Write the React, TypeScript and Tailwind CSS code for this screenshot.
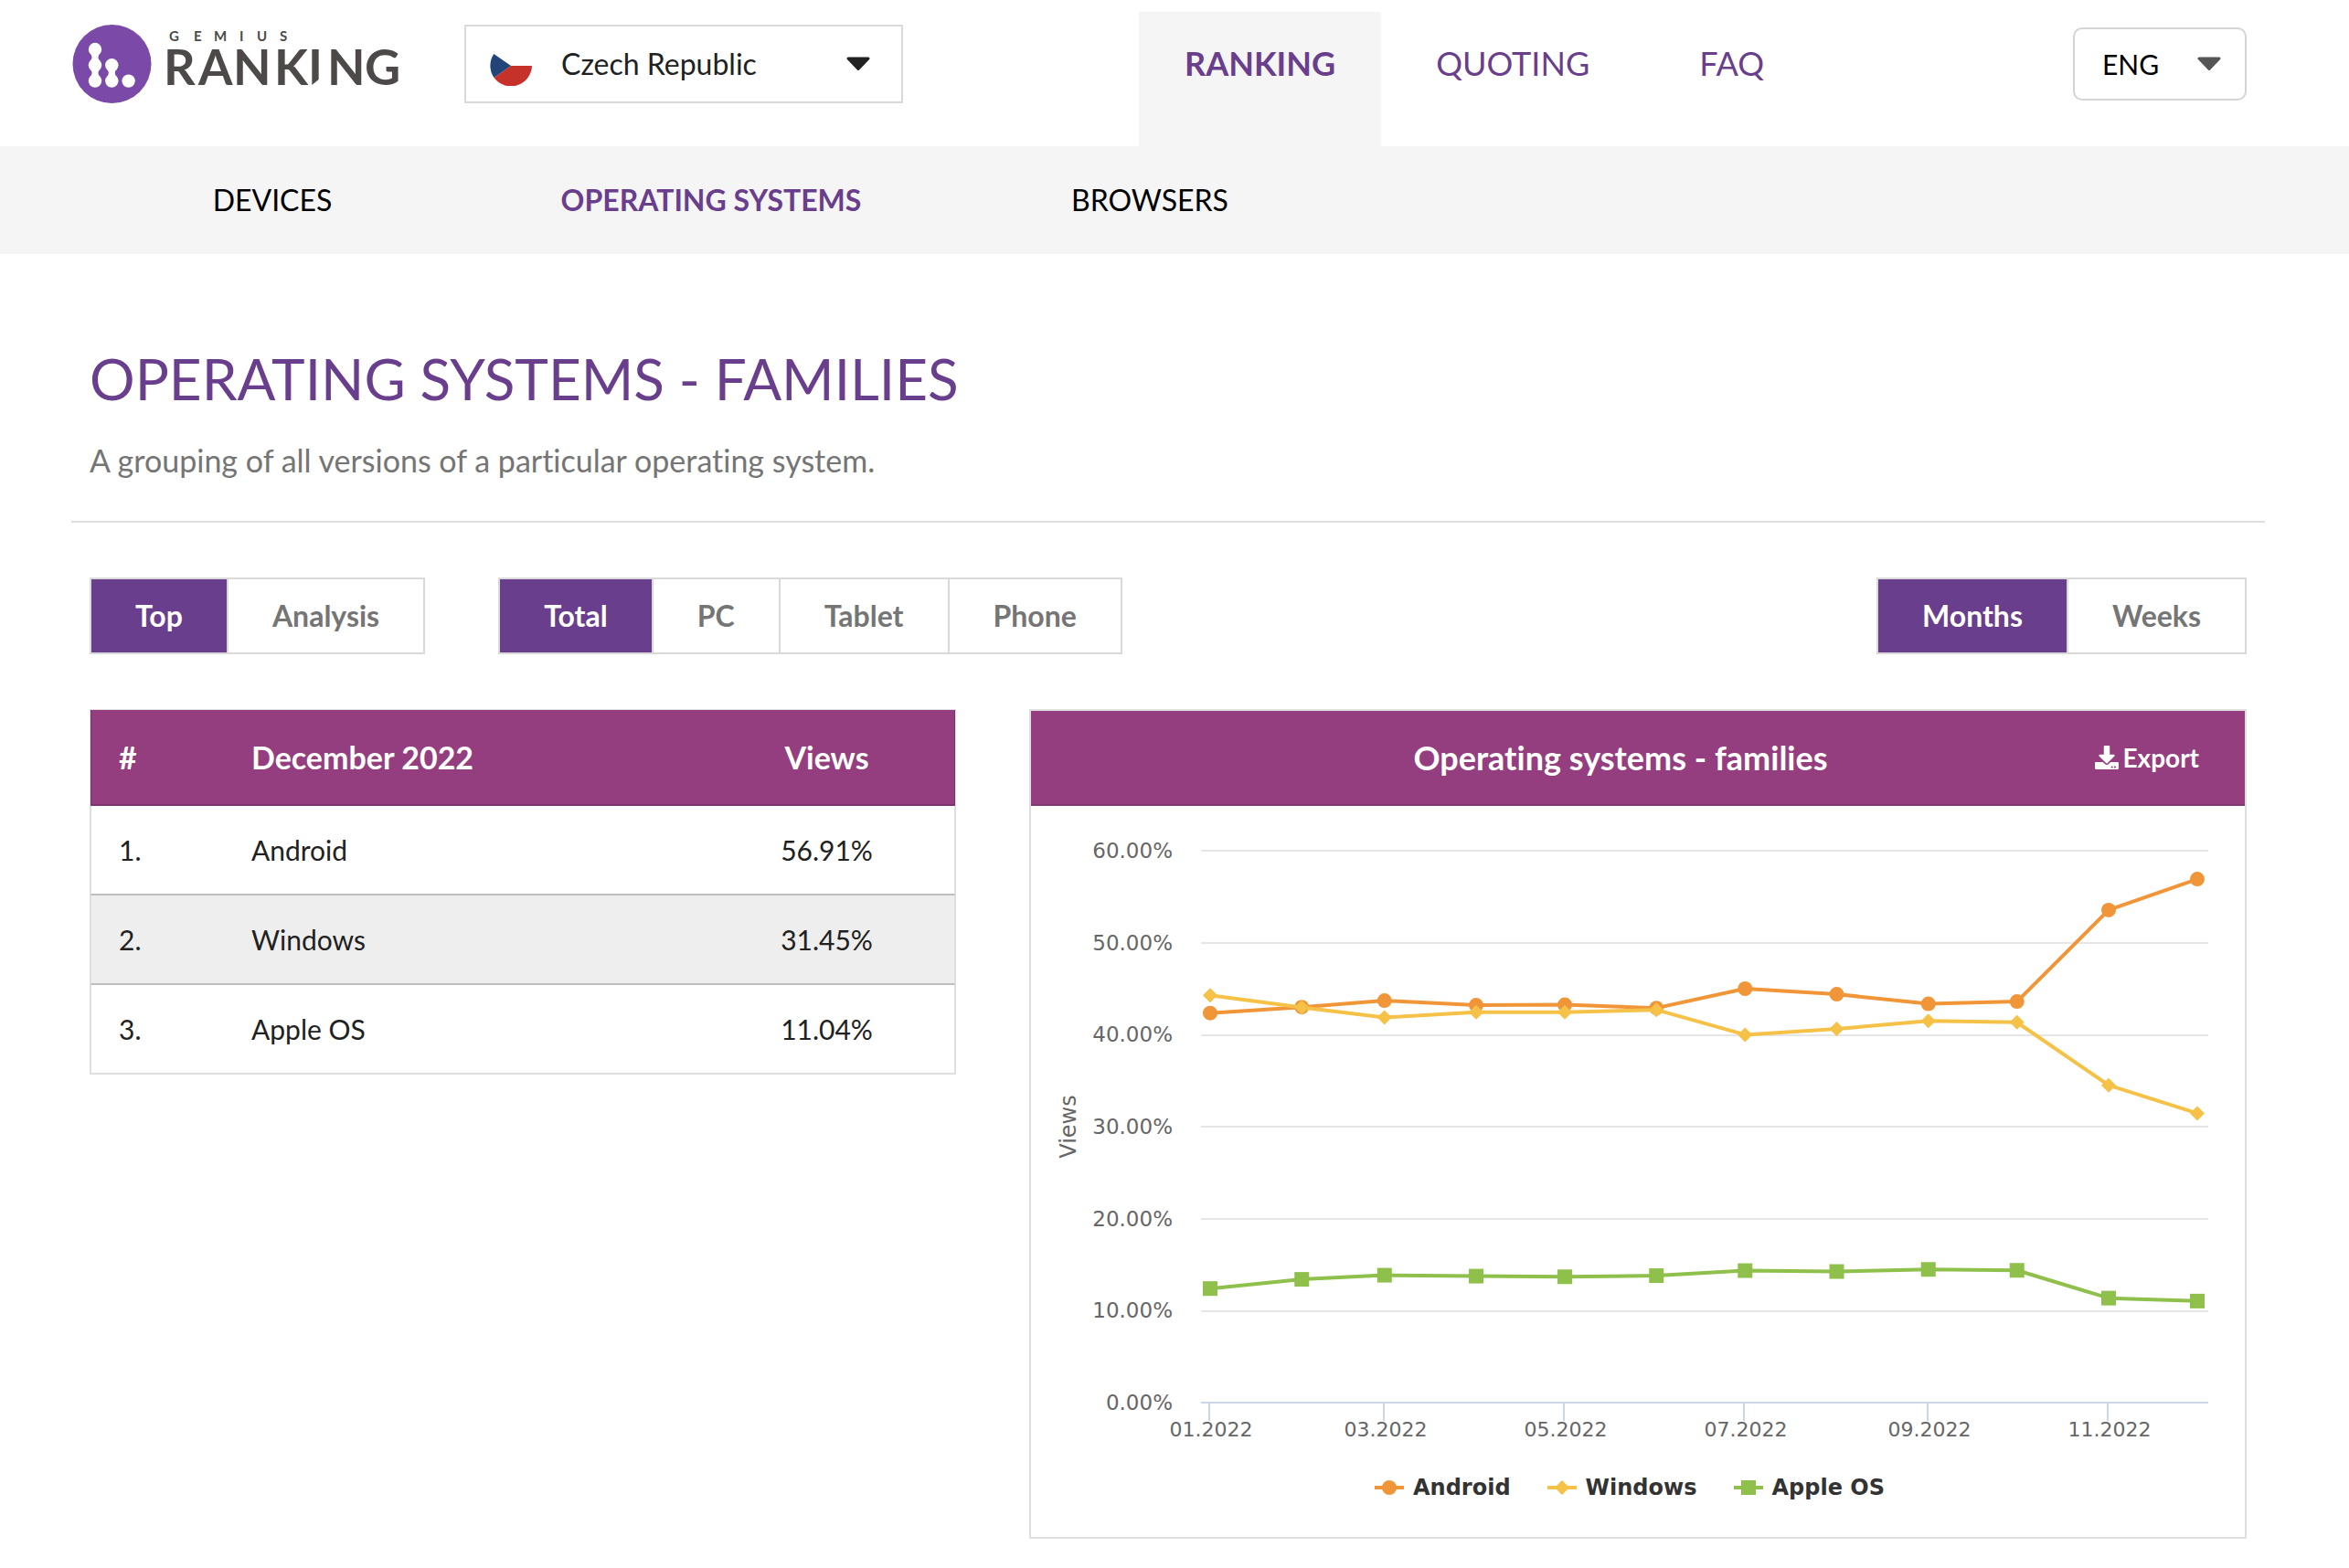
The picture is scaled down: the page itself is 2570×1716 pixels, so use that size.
import React, { useState } from 'react';
import { FaDownload } from 'react-icons/fa';

type Shape = 'circle' | 'diamond' | 'square';

interface Series {
  name: string;
  color: string;
  shape: Shape;
  values: number[];
}

const SERIES: Series[] = [
  {
    name: 'Android',
    color: '#f19539',
    shape: 'circle',
    values: [42.35, 43.0, 43.7, 43.2, 43.25, 42.9, 45.0, 44.4, 43.35, 43.6, 53.55, 56.91],
  },
  {
    name: 'Windows',
    color: '#f5c147',
    shape: 'diamond',
    values: [44.27, 42.97, 41.88, 42.45, 42.45, 42.7, 39.99, 40.62, 41.5, 41.35, 34.5, 31.45],
  },
  {
    name: 'Apple OS',
    color: '#8fc04b',
    shape: 'square',
    values: [12.4, 13.4, 13.85, 13.75, 13.68, 13.8, 14.35, 14.25, 14.48, 14.38, 11.36, 11.04],
  },
];

// first day of each month, counted from January 1st
const MONTH_DAYS = [0, 31, 59, 90, 120, 151, 181, 212, 243, 273, 304, 334];
const Y_TICKS = [60, 50, 40, 30, 20, 10, 0];

const PLOT = { left: 186, right: 1288, top: 49, bottom: 653, first: 196, last: 1276 };

const xOf = (i: number) => PLOT.first + (MONTH_DAYS[i] / 334) * (PLOT.last - PLOT.first);
const yOf = (v: number) => PLOT.bottom - (v / 60) * (PLOT.bottom - PLOT.top);

function Marker({ shape, x, y, color }: { shape: Shape; x: number; y: number; color: string }) {
  switch (shape) {
    case 'circle': return <circle cx={x} cy={y} r={8} fill={color} />;
    case 'diamond': return <path d={`M${x} ${y - 8}L${x + 8} ${y}L${x} ${y + 8}L${x - 8} ${y}Z`} fill={color} />;
    default: return <rect x={x - 8} y={y - 8} width={16} height={16} fill={color} />;
  }
}

function Logo() {
  return (
    <svg viewBox="0 0 360 88" className="w-[360px] h-[88px]" role="img" aria-label="Gemius Ranking">
      <circle cx="44.5" cy="44" r="43" fill="#7b4aa9" />
      <g fill="#fff">
        <circle cx="26" cy="28" r="7.2" />
        <circle cx="26" cy="45.3" r="7.2" />
        <circle cx="26" cy="62.6" r="7.2" />
        <circle cx="44.3" cy="45.3" r="7.2" />
        <circle cx="44.3" cy="62.6" r="7.2" />
        <circle cx="62.6" cy="62.6" r="7.2" />
        <path d="M20.5 32Q24.5 36.6 20.5 41.3H31.5Q27.5 36.6 31.5 32ZM20.5 49.3Q24.5 54 20.5 58.6H31.5Q27.5 54 31.5 49.3ZM38.8 49.3Q42.8 54 38.8 58.6H49.8Q45.8 54 49.8 49.3Z" />
      </g>
      <g fill="#4d4948" className="font-['Lato',sans-serif] font-bold">
        <text x="107 134 156 184 203 228" y="19" fontSize="15">GEMIUS</text>
        <text x="101 139 177 222 259 280 321" y="67" fontSize="54">RANKING</text>
      </g>
      <path d="M262 68L272 60V68H262Z" fill="#fff" />
    </svg>
  );
}

function CzechFlag() {
  return (
    <svg viewBox="0 -2 48 48" className="w-12 h-12" aria-hidden="true">
      <path d="M24 24H47A23 23 0 0 1 5.5 37Z" fill="#c63229" />
      <path d="M24 24L5.3 11A23 23 0 0 0 5.5 37Z" fill="#234479" />
    </svg>
  );
}

function Caret({ color }: { color: string }) {
  return (
    <svg viewBox="0 0 26 16" className="w-[26px] h-4" aria-hidden="true">
      <path d="M2 2H24L13 13.5Z" fill={color} stroke={color} strokeWidth="3" strokeLinejoin="round" />
    </svg>
  );
}

interface ButtonGroupProps {
  label: string;
  options: string[];
  value: string;
  onChange: (value: string) => void;
}

function ButtonGroup({ label, options, value, onChange }: ButtonGroupProps) {
  return (
    <div role="group" aria-label={label} className="flex border-2 border-[#d9d9d9] divide-x-2 divide-[#d9d9d9]">
      {options.map(o => (
        <button
          key={o}
          type="button"
          aria-pressed={o === value}
          onClick={() => onChange(o)}
          className={`h-20 px-12 text-[32px] leading-10 font-bold ${o === value ? 'bg-[#693e8d] text-white' : 'bg-white text-[#757575]'}`}
        >
          {o}
        </button>
      ))}
    </div>
  );
}

function Header() {
  const [country, setCountry] = useState('Czech Republic');
  const [lang, setLang] = useState('ENG');

  return (
    <header>
      <div className="flex items-start h-40 pl-[78px] pr-28">
        <a href="#home" className="mt-[26px] w-[430px]"><Logo /></a>

        <div className="relative mt-[27px] w-[480px]">
          <select
            aria-label="Country"
            value={country}
            onChange={(e) => setCountry(e.target.value)}
            className="appearance-none w-full h-[86px] pl-[104px] border-2 border-[#d9d9d9] bg-white text-[32px] text-[#212121]"
          >
            <option>Czech Republic</option>
            <option>Hungary</option>
            <option>Poland</option>
          </select>
          <div className="absolute inset-0 flex items-center justify-between pl-[27px] pr-9 pointer-events-none">
            <CzechFlag />
            <Caret color="#212121" />
          </div>
        </div>

        <nav className="flex ml-[258px] mt-[13px] text-[36px] leading-[44px] text-[#693e8d]">
          <a href="#ranking" className="h-[147px] pt-[34px] px-[50px] bg-[#f5f5f5] font-bold">RANKING</a>
          <a href="#quoting" className="pt-[34px] px-[60px]">QUOTING</a>
          <a href="#faq" className="pt-[34px] px-[60px]">FAQ</a>
        </nav>

        <div className="relative ml-auto mt-[30px] w-[190px]">
          <select
            aria-label="Language"
            value={lang}
            onChange={(e) => setLang(e.target.value)}
            className="appearance-none w-full h-20 pl-[30px] border-2 border-[#d4d4d4] rounded-[10px] bg-white text-[30px] text-black"
          >
            <option>ENG</option>
            <option>CZE</option>
          </select>
          <div className="absolute inset-0 flex items-center justify-end pr-7 pointer-events-none">
            <Caret color="#555555" />
          </div>
        </div>
      </div>

      <nav className="pl-[58px] pr-28 bg-[#f5f5f5]">
        <div className="grid grid-cols-5 text-center text-[32px] leading-[118px] text-black">
          <a href="#devices">DEVICES</a>
          <a href="#systems" className="font-bold text-[#693e8d]">OPERATING SYSTEMS</a>
          <a href="#browsers">BROWSERS</a>
        </div>
      </nav>
    </header>
  );
}

function RankingTable() {
  const rows = SERIES.map(s => ({ name: s.name, share: s.values[s.values.length - 1] }));

  return (
    <table className="w-full table-fixed border-separate border-spacing-0 border border-[#dfdfdf] text-[30px] leading-9 text-[#212121]">
      <colgroup>
        <col className="w-[176px]" />
        <col />
        <col className="w-[280px]" />
      </colgroup>
      <thead>
        <tr className="h-[105px] bg-[#943e7f] text-white text-[34px] [&>th]:border-b-2 [&>th]:border-[#7a356c]">
          <th scope="col" className="pl-[30px] text-left border-l">#</th>
          <th scope="col" className="text-left">December 2022</th>
          <th scope="col" className="text-center border-r">Views</th>
        </tr>
      </thead>
      <tbody>
        {rows.map((r, i) => (
          <tr
            key={r.name}
            className={`${i % 2 ? 'bg-[#eeeeee]' : 'bg-white'} ${i === rows.length - 1 ? 'h-[97px] [&>td]:border-b [&>td]:border-b-[#dfdfdf]' : 'h-[98px] [&>td]:border-b-2 [&>td]:border-b-[#bdbdbd]'}`}
          >
            <td className="pl-[30px] border-l border-l-[#dfdfdf]">{i + 1}.</td>
            <td>{r.name}</td>
            <td className="text-center border-r border-r-[#dfdfdf]">{r.share.toFixed(2)}%</td>
          </tr>
        ))}
      </tbody>
    </table>
  );
}

function ChartCard() {
  const [hidden, setHidden] = useState<string[]>([]);

  const toggle = (name: string) =>
    setHidden(h => (h.includes(name) ? h.filter(n => n !== name) : [...h, name]));

  return (
    <section className="border-2 border-[#dfdfdf]">
      <div className="grid grid-cols-[1fr_auto_1fr] items-center h-[104px] pr-[38px] bg-[#943e7f] border-b-2 border-[#803a72] text-white font-bold">
        <h2 className="col-start-2 text-[36px] leading-[44px]">Operating systems - families</h2>
        <button type="button" className="justify-self-end flex items-center gap-1 px-3 text-[28px] leading-9">
          <FaDownload className="w-[26px] h-[26px]" />
          Export
        </button>
      </div>

      <svg
        viewBox="0 0 1328 716"
        className="block w-full h-auto font-['DejaVu_Sans',Verdana,sans-serif]"
        role="img"
        aria-label="Views by operating system family, 2022"
      >
        {Y_TICKS.map(t => (
          <g key={t}>
            <rect x={PLOT.left} y={Math.ceil(yOf(t)) - 1} width={PLOT.right - PLOT.left} height={2} fill={t === 0 ? '#ccd6eb' : '#e6e6e6'} />
            <text x={155} y={Math.round(yOf(t)) + 8} fontSize={23} fill="#666666" textAnchor="end">{t.toFixed(2)}%</text>
          </g>
        ))}
        {MONTH_DAYS.map((_, i) => i % 2 === 0 && (
          <g key={i}>
            <rect x={Math.round(xOf(i)) - 2} y={PLOT.bottom} width={2} height={20} fill="#ccd6eb" />
            <text x={Math.round(xOf(i)) + 1} y={690} fontSize={22} fill="#666666" textAnchor="middle">
              {String(i + 1).padStart(2, '0')}.2022
            </text>
          </g>
        ))}
        <text x={49} y={351} fontSize={24} fill="#666666" textAnchor="middle" transform="rotate(-90 49 351)">Views</text>

        {SERIES.filter(s => !hidden.includes(s.name)).map(s => (
          <g key={s.name}>
            <polyline
              points={s.values.map((v, i) => `${xOf(i)},${yOf(v)}`).join(' ')}
              fill="none"
              stroke={s.color}
              strokeWidth={4}
              strokeLinejoin="round"
            />
            {s.values.map((v, i) => (
              <Marker key={i} shape={s.shape} x={xOf(i)} y={yOf(v)} color={s.color} />
            ))}
          </g>
        ))}
      </svg>

      <div className="flex justify-center gap-10 pt-3 pb-9 pr-[18px] font-['DejaVu_Sans',Verdana,sans-serif]">
        {SERIES.map(s => (
          <button
            key={s.name}
            type="button"
            onClick={() => toggle(s.name)}
            className={`flex items-center gap-2.5 text-[24px] leading-9 font-bold ${hidden.includes(s.name) ? 'text-[#cccccc]' : 'text-[#333333]'}`}
          >
            <svg viewBox="0 0 32 16" className="w-8 h-4" aria-hidden="true">
              <path d="M0 8H32" stroke={s.color} strokeWidth="4" />
              <Marker shape={s.shape} x={16} y={8} color={s.color} />
            </svg>
            {s.name}
          </button>
        ))}
      </div>
    </section>
  );
}

export default function App() {
  const [view, setView] = useState('Top');
  const [platform, setPlatform] = useState('Total');
  const [period, setPeriod] = useState('Months');

  return (
    <div className="min-h-screen bg-white font-['Lato',sans-serif] [font-variant-ligatures:none]">
      <Header />

      <main className="pl-[78px] pr-[92px] pt-24 pb-8">
        <div className="px-5 pb-[42px] border-b-2 border-[#dfdfdf]">
          <h1 className="text-[62px] leading-[80px] text-[#693e8d]">OPERATING SYSTEMS - FAMILIES</h1>
          <p className="mt-[26px] text-[34px] leading-[48px] text-[#757575]">
            A grouping of all versions of a particular operating system.
          </p>
        </div>

        <div className="px-5 pt-[60px]">
          <div className="flex gap-20">
            <ButtonGroup label="View" options={['Top', 'Analysis']} value={view} onChange={setView} />
            <ButtonGroup label="Platform" options={['Total', 'PC', 'Tablet', 'Phone']} value={platform} onChange={setPlatform} />
            <div className="ml-auto">
              <ButtonGroup label="Period" options={['Months', 'Weeks']} value={period} onChange={setPeriod} />
            </div>
          </div>

          <div className="mt-[60px] grid grid-cols-[79fr_111fr] gap-20 items-start">
            <RankingTable />
            <ChartCard />
          </div>
        </div>
      </main>
    </div>
  );
}
